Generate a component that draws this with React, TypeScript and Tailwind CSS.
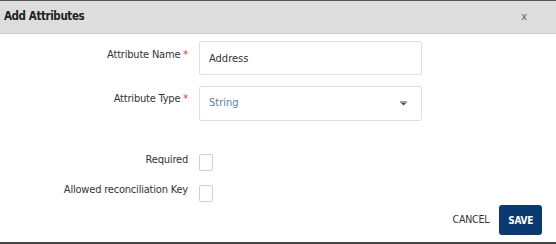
export default function App() {
  return (
    <div className="w-[556px] h-[244px] bg-white font-['DejaVu_Sans_Condensed','Liberation_Sans',sans-serif] text-[#333] flex flex-col border-t border-b-2 border-t-[#555] border-b-[#444]">
      <div className="h-[33px] bg-[#dddddd] border-b border-[#c8c8c8] flex items-center justify-between pl-[4px] pr-[29px]">
        <h2 className="text-[11.5px] font-bold text-[#222] tracking-[-0.4px]">Add Attributes</h2>
        <span className="text-[11px] text-[#666]">x</span>
      </div>
      <div className="flex-1 flex flex-col pt-[7px]">
        <div className="flex items-center h-[34px]">
          <label className="w-[199px] text-right text-[11px] tracking-[-0.2px] pr-[11px] -mt-[6px]">
            Attribute Name <span className="text-[#e53935]">*</span>
          </label>
          <input
            defaultValue="Address"
            className="w-[223px] h-[34px] border border-[#e0e0e0] rounded-[2px] px-[9px] text-[11px] text-[#333] outline-none"
          />
        </div>
        <div className="flex items-center h-[35px] mt-[11px]">
          <label className="w-[199px] text-right text-[11px] tracking-[-0.2px] pr-[11px] -mt-[9px]">
            Attribute Type <span className="text-[#e53935]">*</span>
          </label>
          <div className="w-[223px] h-[35px] border border-[#e0e0e0] rounded-[2px] pl-[9px] pr-[14px] flex items-center justify-between">
            <span className="text-[11px] text-[#5b7fae]">String</span>
            <svg width="7" height="5" viewBox="0 0 7 5">
              <rect x="0" y="0.5" width="7" height="1" fill="#444" />
              <path d="M1 2 H6 L3.5 4.6 Z" fill="#444" />
            </svg>
          </div>
        </div>
        <div className="flex items-start mt-[32px]">
          <label className="w-[199px] text-right text-[11px] tracking-[-0.2px] pr-[11px] -mt-[1px]">Required</label>
          <span className="w-[14px] h-[17px] border border-[#cfcfcf] rounded-[2px] mt-[1px]" />
        </div>
        <div className="flex items-start mt-[14px]">
          <label className="w-[199px] text-right text-[11px] tracking-[-0.2px] pr-[11px] -mt-[3px]">Allowed reconciliation Key</label>
          <span className="w-[14px] h-[17px] border border-[#cfcfcf] rounded-[2px]" />
        </div>
        <div className="flex justify-end items-center gap-[10px] pr-[14px] mt-[3px]">
          <button className="text-[10.5px] text-[#333] tracking-[-0.2px]">CANCEL</button>
          <button className="h-[30px] px-[9px] rounded-[3px] bg-[#0b3a70] text-white text-[10px] font-bold tracking-[-0.3px]">SAVE</button>
        </div>
      </div>
    </div>
  );
}
